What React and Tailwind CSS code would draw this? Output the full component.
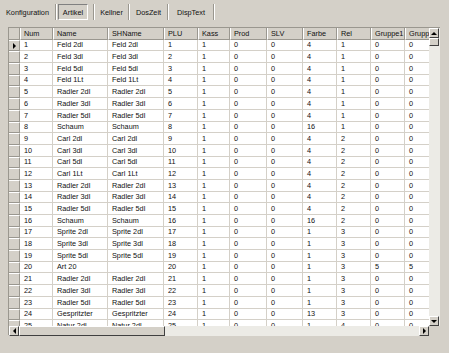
import React from "react";

const cols = [
  { key: "num", label: "Num", w: "w-[33px]" },
  { key: "name", label: "Name", w: "w-[55px]" },
  { key: "sh", label: "SHName", w: "w-[56px]" },
  { key: "plu", label: "PLU", w: "w-[34px]" },
  { key: "kass", label: "Kass", w: "w-[32px]" },
  { key: "prod", label: "Prod", w: "w-[37px]" },
  { key: "slv", label: "SLV", w: "w-[36px]" },
  { key: "farbe", label: "Farbe", w: "w-[34px]" },
  { key: "rel", label: "Rel", w: "w-[34px]" },
  { key: "g1", label: "Gruppe1", w: "w-[34px]" },
  { key: "g2", label: "Gruppe2", w: "w-[40px]" },
];

// num, name, shname, farbe, rel, g1, g2
const raw = [
  [1, "Feld 2dl", "Feld 2dl", 4, 1],
  [2, "Feld 3dl", "Feld 3dl", 4, 1],
  [3, "Feld 5dl", "Feld 5dl", 4, 1],
  [4, "Feld 1Lt", "Feld 1Lt", 4, 1],
  [5, "Radler 2dl", "Radler 2dl", 4, 1],
  [6, "Radler 3dl", "Radler 3dl", 4, 1],
  [7, "Radler 5dl", "Radler 5dl", 4, 1],
  [8, "Schaum", "Schaum", 16, 1],
  [9, "Carl 2dl", "Carl 2dl", 4, 2],
  [10, "Carl 3dl", "Carl 3dl", 4, 2],
  [11, "Carl 5dl", "Carl 5dl", 4, 2],
  [12, "Carl 1Lt", "Carl 1Lt", 4, 2],
  [13, "Radler 2dl", "Radler 2dl", 4, 2],
  [14, "Radler 3dl", "Radler 3dl", 4, 2],
  [15, "Radler 5dl", "Radler 5dl", 4, 2],
  [16, "Schaum", "Schaum", 16, 2],
  [17, "Sprite 2dl", "Sprite 2dl", 1, 3],
  [18, "Sprite 3dl", "Sprite 3dl", 1, 3],
  [19, "Sprite 5dl", "Sprite 5dl", 1, 3],
  [20, "Art 20", "", 1, 3, 5, 5],
  [21, "Radler 2dl", "Radler 2dl", 1, 3],
  [22, "Radler 3dl", "Radler 3dl", 1, 3],
  [23, "Radler 5dl", "Radler 5dl", 1, 3],
  [24, "Gespritzter", "Gespritzter", 13, 3],
  [25, "Natur 2dl", "Natur 2dl", 1, 4],
];

const rows = raw.map(([num, name, sh, farbe, rel, g1 = 0, g2 = 0]) => ({
  num, name, sh, plu: num, kass: 1, prod: 0, slv: 0, farbe, rel, g1, g2,
}));

const tabs = [
  { label: "Konfiguration", w: "w-[55px]" },
  { label: "Artikel", w: "w-[36px]", active: true },
  { label: "Kellner", w: "w-[33px]" },
  { label: "DosZeit", w: "w-[37px]" },
  { label: "DispText", w: "w-[44px]" },
];

function Sep() {
  return <div className="h-[16px] w-[2px] shrink-0 border-l border-[#9a978f] border-r border-r-white" />;
}

function ArrowBtn({ dir }) {
  const tri = {
    up: "border-l-[3px] border-r-[3px] border-b-[3px] border-l-transparent border-r-transparent border-b-black",
    down: "border-l-[3px] border-r-[3px] border-t-[3px] border-l-transparent border-r-transparent border-t-black",
    left: "border-t-[3px] border-b-[3px] border-r-[3px] border-t-transparent border-b-transparent border-r-black",
    right: "border-t-[3px] border-b-[3px] border-l-[3px] border-t-transparent border-b-transparent border-l-black",
  }[dir];
  return (
    <div className="w-[10px] h-[10px] shrink-0 bg-[#d4d0c8] border border-t-white border-l-white border-r-[#404040] border-b-[#404040] flex items-center justify-center">
      <div className={`w-0 h-0 ${tri}`} />
    </div>
  );
}

export default function App() {
  return (
    <div
      className="w-[449px] h-[353px] bg-[#d4d0c8] overflow-hidden text-[7.3px] leading-none text-[#111]"
      style={{ fontFamily: '"Liberation Sans", Arial, sans-serif' }}
    >
      {/* Reiter */}
      <div className="h-[27px] flex items-start pt-[4px]">
        {tabs.map((t) => (
          <React.Fragment key={t.label}>
            <div className={`${t.w} h-[16px] flex items-center justify-center`}>
              {t.active ? (
                <div className="w-[30px] h-[16px] ml-[-4px] flex items-center justify-center border border-t-[#808080] border-l-[#808080] border-b-white border-r-white pt-[1px]">
                  {t.label}
                </div>
              ) : (
                <span className="pt-[1px]">{t.label}</span>
              )}
            </div>
            <Sep />
          </React.Fragment>
        ))}
      </div>

      {/* Datengitter */}
      <div className="ml-[8px] w-[432px] h-[308px] flex flex-col border-t border-l border-[#9a978f]">
        <div className="flex h-[298px]">
          <div className="w-[420px] overflow-hidden bg-[#d4d0c8]">
            {/* Kopfzeile */}
            <div className="flex h-[11.7px]">
              <div className="w-[11px] shrink-0 bg-[#d4d0c8] border-r border-b border-[#9a978f]" />
              {cols.map((c) => (
                <div
                  key={c.key}
                  className={`${c.w} shrink-0 bg-[#d4d0c8] border-r border-b border-[#9a978f] border-l border-l-white pl-[3px] flex items-center overflow-hidden whitespace-nowrap`}
                >
                  {c.label}
                </div>
              ))}
            </div>
            {rows.map((r, i) => (
              <div key={r.num} className="flex h-[11.7px]">
                <div className="w-[11px] shrink-0 bg-[#d4d0c8] border-r border-b border-[#9a978f] border-t border-t-white flex items-center justify-center">
                  {i === 0 && (
                    <div className="w-0 h-0 border-t-[3px] border-b-[3px] border-l-[3px] border-t-transparent border-b-transparent border-l-black" />
                  )}
                </div>
                {cols.map((c) => (
                  <div
                    key={c.key}
                    className={`${c.w} shrink-0 bg-white border-r border-b border-[#d4d0c8] pl-[4px] flex items-center overflow-hidden whitespace-nowrap`}
                  >
                    {r[c.key]}
                  </div>
                ))}
              </div>
            ))}
          </div>

          {/* vertikaler Rollbalken */}
          <div className="w-[11px] flex flex-col bg-[#ecebe6]">
            <ArrowBtn dir="up" />
            <div className="w-[10px] h-[8px] bg-[#d4d0c8] border border-t-white border-l-white border-r-[#404040] border-b-[#404040]" />
            <div className="flex-1" />
            <ArrowBtn dir="down" />
          </div>
        </div>

        {/* horizontaler Rollbalken */}
        <div className="flex h-[10px]">
          <div className="w-[420px] flex bg-[#ecebe6]">
            <ArrowBtn dir="left" />
            <div className="w-[146px] h-[10px] bg-[#d4d0c8] border border-t-white border-l-white border-r-[#404040] border-b-[#404040]" />
            <div className="flex-1" />
            <ArrowBtn dir="right" />
          </div>
          <div className="w-[11px] bg-[#d4d0c8]" />
        </div>
      </div>
    </div>
  );
}
